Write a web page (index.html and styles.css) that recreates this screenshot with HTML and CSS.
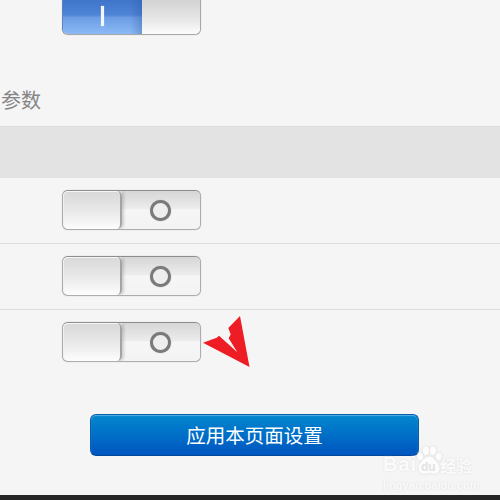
FILE: index.html
```html
<!DOCTYPE html>
<html lang="zh">
<head>
<meta charset="utf-8">
<title>应用本页面设置</title>
<link rel="stylesheet" href="styles.css">
</head>
<body>
<main class="page">
  <div class="top-row">
    <div class="switch on">
      <div class="on-part"><span class="bar"></span></div>
      <div class="thumb thumb-right"></div>
    </div>
  </div>
  <h2 class="heading">配置参数</h2>
  <div class="band"></div>
  <div class="row">
    <div class="switch off"><div class="thumb"></div><div class="off-part"><span class="ring"></span></div></div>
  </div>
  <div class="row">
    <div class="switch off"><div class="thumb"></div><div class="off-part"><span class="ring"></span></div></div>
  </div>
  <div class="row last">
    <div class="switch off"><div class="thumb"></div><div class="off-part"><span class="ring"></span></div></div>
  </div>
  <div class="actions"><button class="apply" type="button">应用本页面设置</button></div>
  <div class="spacer"></div>
  <div class="footer"></div>

  <svg class="arrow" width="60" height="60" viewBox="200 312 60 60" aria-hidden="true">
    <polygon fill="#ee1c25" points="249.500,367 240,316 228.300,328 230.700,334.300 228.700,338.300 237.300,352.300 219,335.700 216.700,337.800 203,342.700"/>
  </svg>

  <div class="watermark">
    <div class="wm-main">
      <span class="wm-bai">Bai</span>
      <svg class="wm-paw" width="28" height="30" viewBox="0 0 30 34" aria-hidden="true">
        <ellipse cx="5" cy="12" rx="3.4" ry="4.4"/>
        <ellipse cx="11.5" cy="5.5" rx="3.6" ry="4.8"/>
        <ellipse cx="19.5" cy="5.5" rx="3.6" ry="4.8"/>
        <ellipse cx="26" cy="12" rx="3.4" ry="4.4"/>
        <path d="M15 12c-5 0-12 8-12 13 0 5 4 7 7 6.500 2-.3 3.500-1 5-1s3 .7 5 1c3 .5 7-1.500 7-6.500 0-5-7-13-12-13z"/>
      </svg>
      <span class="wm-du">du</span>
      <span class="wm-cn">经验</span>
    </div>
    <div class="wm-url">jingyan.baidu.com</div>
  </div>
</main>
</body>
</html>
```
FILE: styles.css
```css
* { box-sizing: border-box; }
html, body { margin: 0; padding: 0; }
body { width: 500px; height: 500px; overflow: hidden; background: #f5f5f5; font-family: "Noto Sans CJK SC", "Liberation Sans", sans-serif; }
.page { position: relative; width: 500px; height: 500px; overflow: hidden; display: flex; flex-direction: column; }

.top-row { margin-top: -5px; padding-left: 62px; height: 40px; flex: none; }
.heading { margin: 50px 0 0 -39px; height: 41px; font-size: 20px; line-height: 30px; font-weight: 400; color: #858585; white-space: nowrap; flex: none; }
.band { height: 52px; background: #e3e3e3; border-top: 1px solid #dcdcdc; flex: none; }
.row { height: 66px; padding: 12px 0 0 62px; border-bottom: 1px solid #dcdcdc; flex: none; }
.row.last { border-bottom: 0; height: 65px; }

.switch { width: 139px; height: 40px; display: flex; border-radius: 6px; overflow: hidden; border: 1px solid #adadad; background: #f2f2f2; box-shadow: 0 0 1px rgba(0,0,0,.3); flex: none; }
.switch.off { border-top-color: #8e8e8e; }
.thumb { width: 59px; flex: none; background: linear-gradient(#d8d8d8, #e8e8e8 50%, #fdfdfd); border-radius: 5px; border-right: 2px solid #a4a4a4; box-shadow: inset 0 1px 0 #f6f6f6, inset 1px 0 0 #efefef, 2px 0 3px rgba(0,0,0,.16); position: relative; }
.thumb-right { border-right: 0; border-radius: 0 5px 5px 0; background: linear-gradient(#cfcfcf, #e4e4e4 55%, #fcfcfc); box-shadow: none; }
.off-part { flex: 1; display: flex; align-items: center; justify-content: center; padding-right: 2px; background: linear-gradient(#d6d6d6, #ececec 46%, #f6f6f6 50%, #f3f3f3); }
.ring { width: 21px; height: 21px; border-radius: 50%; border: 3px solid #7a7a7a; background: #eeeeee; box-shadow: 0 0 1px #888; }
.on-part { width: 79px; flex: none; display: flex; justify-content: center; align-items: flex-start; padding-top: 10px; background: linear-gradient(90deg, transparent 85%, rgba(40,80,150,.3)), linear-gradient(#3a72c8, #4f84d6 50%, #6b9ce4 56%, #8cbaf6); box-shadow: 1px 0 1px rgba(255,255,255,.8); }
.switch.on { border-color: #5b84c0 #a8a8a8 #a8a8a8 #5b84c0; }
.bar { width: 3px; height: 20px; background: #f2f7ff; box-shadow: 0 0 1px #fff; }

.actions { padding: 39px 0 0 90px; flex: none; }
.apply { display: block; width: 329px; height: 42px; padding: 0; border: 1px solid #0a5da8; border-bottom-color: #02479c; border-radius: 6px; background: linear-gradient(#0386cd, #0071c8 45%, #0055c0); box-shadow: inset 0 1px 1px rgba(120,200,240,.7); color: #fff; font-family: inherit; font-size: 19.5px; line-height: 38px; text-align: center; }

.spacer { flex: 1; }
.footer { height: 5px; background: #262626; flex: none; }

.arrow { position: absolute; left: 200px; top: 312px; }

.watermark { position: absolute; left: 383px; top: 446px; width: 114px; color: #fbfbfb; text-shadow: 0 0 2px #dadada; }
.wm-main { display: flex; align-items: flex-end; height: 30px; font-family: "Liberation Sans", sans-serif; font-weight: 700; position: relative; }
.wm-bai { font-size: 20px; line-height: 24px; letter-spacing: 1px; width: 32px; flex: none; }
.wm-paw { position: absolute; left: 32px; top: 0; fill: #fcfcfc; filter: drop-shadow(0 0 1px #d4d4d4); }
.wm-du { position: absolute; left: 38px; top: 14px; font-size: 12px; line-height: 14px; color: #e2e2e2; text-shadow: none; }
.wm-cn { margin-left: 25px; font-family: "Noto Sans CJK SC", sans-serif; font-size: 16px; line-height: 22px; font-weight: 700; }
.wm-url { font-family: "Liberation Sans", sans-serif; font-size: 11px; line-height: 14px; margin-top: 2px; font-weight: 700; white-space: nowrap; }
```
